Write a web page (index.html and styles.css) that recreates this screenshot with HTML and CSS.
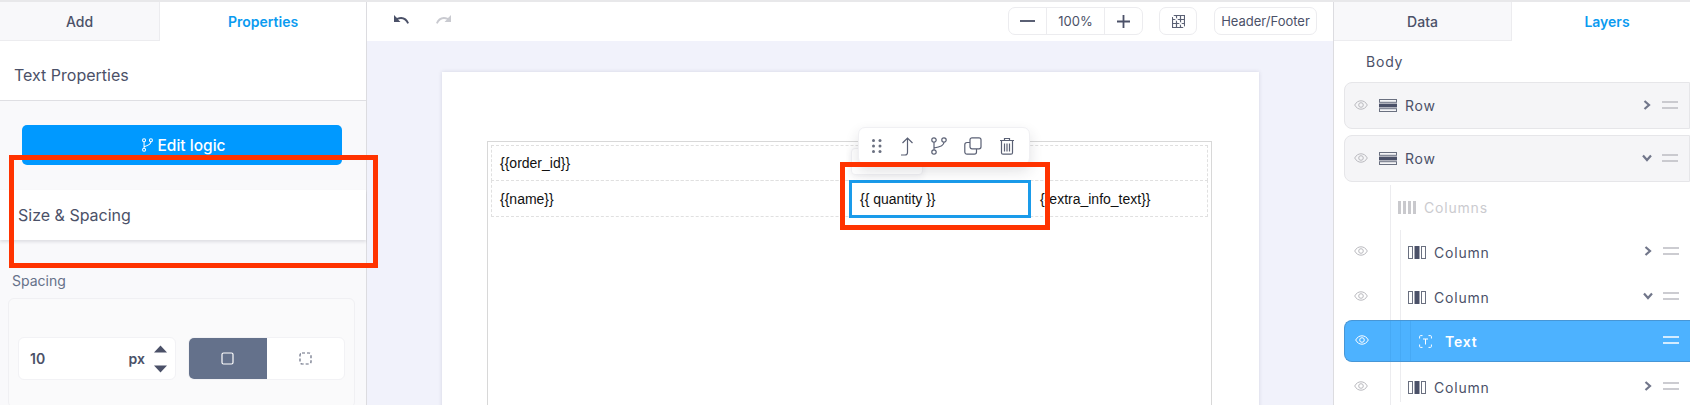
FILE: index.html
```html
<!DOCTYPE html>
<html lang="en">
<head>
<meta charset="utf-8">
<title>Text Properties</title>
<link rel="stylesheet" href="styles.css">
</head>
<body>
<svg class="defs" width="0" height="0" aria-hidden="true">
  <symbol id="eye" viewBox="0 0 14 10"><path d="M.7 5C2.200 2.200 4.400.8 7 .8s4.800 1.400 6.300 4.200C11.800 7.800 9.600 9.200 7 9.200S2.200 7.800.7 5Z" fill="none" stroke="currentColor" stroke-width="1"/><circle cx="7" cy="5" r="2.300" fill="none" stroke="currentColor" stroke-width="1"/></symbol>
  <symbol id="rowi" viewBox="0 0 18 13"><rect x=".5" y=".5" width="17" height="2.800" fill="none" stroke="#6a7080" stroke-width="1"/><rect y="4.600" width="18" height="3.800" fill="#4b5168"/><rect x=".5" y="9.700" width="17" height="2.800" fill="none" stroke="#6a7080" stroke-width="1"/></symbol>
  <symbol id="coli" viewBox="0 0 18 13"><rect x=".5" y=".5" width="4" height="12" fill="none" stroke="#6a7080" stroke-width="1"/><rect x="6.500" width="5" height="13" fill="#4b5168"/><rect x="13.500" y=".5" width="4" height="12" fill="none" stroke="#6a7080" stroke-width="1"/></symbol>
  <symbol id="right" viewBox="0 0 8 10"><path d="M1.500 1 6 5 1.500 9" fill="none" stroke="#71768a" stroke-width="2.200"/></symbol>
  <symbol id="down" viewBox="0 0 10 8"><path d="M1 1.500 5 6 9 1.500" fill="none" stroke="#71768a" stroke-width="2.200"/></symbol>
  <symbol id="handle" viewBox="0 0 16 8"><path d="M0 1h16M0 7h16" fill="none" stroke="currentColor" stroke-width="1.300"/></symbol>
  <symbol id="branch" viewBox="0 0 16 20"><circle cx="3" cy="3" r="2.200" fill="none" stroke="currentColor" stroke-width="1.500"/><circle cx="13" cy="3" r="2.200" fill="none" stroke="currentColor" stroke-width="1.500"/><circle cx="3" cy="17" r="2.200" fill="none" stroke="currentColor" stroke-width="1.500"/><path d="M3 5.200v9.600M13 5.200C13 9 8 11 3 12.500" fill="none" stroke="currentColor" stroke-width="1.500"/></symbol>
</svg>

<div class="app">
  <aside class="left">
    <div class="tabs tabs-left">
      <div class="tab tab-add">Add</div>
      <div class="tab tab-on tab-props">Properties</div>
    </div>
    <div class="panel-title">Text Properties</div>
    <div class="logic-wrap">
      <button class="logic-btn" type="button">
        <svg class="logic-icon" width="11" height="14"><use href="#branch"/></svg>
        Edit logic
      </button>
    </div>
    <div class="section-head">Size &amp; Spacing</div>
    <div class="section-body">
      <div class="field-label">Spacing</div>
      <div class="field-card">
        <div class="field-row">
          <div class="num-input">
            <span class="num-value">10</span>
            <span class="num-unit">px</span>
            <span class="stepper">
              <svg width="13" height="8" viewBox="0 0 13 8"><path d="M6.500.5 13 7.500H0Z" fill="#4b5168"/></svg>
              <svg width="13" height="8" viewBox="0 0 13 8"><path d="M0 .5h13L6.500 7.500Z" fill="#4b5168"/></svg>
            </span>
          </div>
          <div class="toggle">
            <div class="toggle-on">
              <svg width="13" height="13" viewBox="0 0 13 13"><rect x="1" y="1" width="11" height="11" rx="1.500" fill="none" stroke="#fff" stroke-width="1.200"/></svg>
            </div>
            <div class="toggle-off">
              <svg width="13" height="13" viewBox="0 0 13 13"><rect x="1" y="1" width="11" height="11" rx="2" fill="none" stroke="#666c80" stroke-width="1.200" stroke-dasharray="3 2"/></svg>
            </div>
          </div>
        </div>
      </div>
    </div>
  </aside>

  <main class="center">
    <div class="toolbar">
      <div class="history">
        <svg width="15" height="9" viewBox="0 0 15 9"><path d="M0 0v7h6.500L4 4.600C7.500 2.800 11.500 4.500 13.300 8.700L15 8C13 2.400 8 .5 3 3Z" fill="#4b5168"/></svg>
        <svg width="15" height="9" viewBox="0 0 15 9"><path d="M15 0v7H8.500L11 4.600C7.500 2.800 3.500 4.500 1.700 8.700L0 8C2 2.400 7 .5 12 3Z" fill="#c9cad0"/></svg>
      </div>
      <div class="zoom">
        <div class="zoom-btn"><svg width="15" height="2"><rect width="15" height="2" fill="#5a6074"/></svg></div>
        <div class="zoom-val">100%</div>
        <div class="zoom-btn"><svg width="13" height="13"><path d="M0 6.500h13M6.500 0v13" stroke="#4b5168" stroke-width="1.800"/></svg></div>
      </div>
      <div class="tool-btn grid-btn">
        <svg width="13" height="13" viewBox="0 0 13 13"><path d="M.5.500h12v12H.5ZM4.500.500v12M8.500.500v12M.5 4.500h12M.5 8.500h12" fill="none" stroke="#5a6074" stroke-width="1.200"/><path d="M0 0l13 13" stroke="#fff" stroke-width="1.800"/></svg>
      </div>
      <div class="tool-btn hf-btn">Header/Footer</div>
    </div>
    <div class="canvas">
      <div class="page">
        <div class="container">
          <div class="row row-one"><div class="cell">{{order_id}}</div></div>
          <div class="row row-two">
            <div class="cell">{{name}}</div>
            <div class="cell cell-selected">{{ quantity }}</div>
            <div class="cell cell-extra">{{extra_info_text}}</div>
          </div>
        </div>
      </div>
    </div>
  </main>

  <aside class="right">
    <div class="tabs tabs-right">
      <div class="tab tab-data">Data</div>
      <div class="tab tab-on tab-layers">Layers</div>
    </div>
    <div class="layers">
      <div class="body-label">Body</div>
      <div class="layer boxed">
        <svg class="eye" width="14" height="10"><use href="#eye"/></svg>
        <svg class="lic" width="18" height="13"><use href="#rowi"/></svg>
        <span class="lname">Row</span>
        <svg class="chev chev-r" width="8" height="10"><use href="#right"/></svg>
        <svg class="grip" width="16" height="8"><use href="#handle"/></svg>
      </div>
      <div class="layer boxed">
        <svg class="eye" width="14" height="10"><use href="#eye"/></svg>
        <svg class="lic" width="18" height="13"><use href="#rowi"/></svg>
        <span class="lname">Row</span>
        <svg class="chev" width="10" height="8"><use href="#down"/></svg>
        <svg class="grip" width="16" height="8"><use href="#handle"/></svg>
      </div>
      <div class="tree">
        <div class="layer columns-head">
          <svg class="cols-ic" width="18" height="13" viewBox="0 0 18 13"><path d="M0 0h3v13H0ZM5 0h3v13H5ZM10 0h3v13h-3ZM15 0h3v13h-3Z" fill="#c9c9cd"/></svg>
          <span class="lname">Columns</span>
        </div>
        <div class="layer lv2 col1">
          <svg class="eye" width="14" height="10"><use href="#eye"/></svg>
          <svg class="lic" width="18" height="13"><use href="#coli"/></svg>
          <span class="lname">Column</span>
          <svg class="chev chev-r" width="8" height="10"><use href="#right"/></svg>
          <svg class="grip" width="16" height="8"><use href="#handle"/></svg>
        </div>
        <div class="layer lv2 col2">
          <svg class="eye" width="14" height="10"><use href="#eye"/></svg>
          <svg class="lic" width="18" height="13"><use href="#coli"/></svg>
          <span class="lname">Column</span>
          <svg class="chev" width="10" height="8"><use href="#down"/></svg>
          <svg class="grip" width="16" height="8"><use href="#handle"/></svg>
        </div>
        <div class="layer selected">
          <svg class="eye" width="14" height="10"><use href="#eye"/></svg>
          <svg class="tic" width="13" height="13" viewBox="0 0 13 13"><path d="M3.500.6H1.600a1 1 0 0 0-1 1v1.900M9.500.6h1.900a1 1 0 0 1 1 1v1.900M3.500 12.400H1.600a1 1 0 0 1-1-1V9.500M9.500 12.400h1.900a1 1 0 0 0 1-1V9.500M4 4h5M6.500 4v5.500" fill="none" stroke="#fff" stroke-width="1"/></svg>
          <span class="lname">Text</span>
          <svg class="grip" width="16" height="8"><use href="#handle"/></svg>
        </div>
        <div class="layer lv2 col3">
          <svg class="eye" width="14" height="10"><use href="#eye"/></svg>
          <svg class="lic" width="18" height="13"><use href="#coli"/></svg>
          <span class="lname">Column</span>
          <svg class="chev chev-r" width="8" height="10"><use href="#right"/></svg>
          <svg class="grip" width="16" height="8"><use href="#handle"/></svg>
        </div>
      </div>
    </div>
  </aside>

  <div class="ghost-menu"></div>
  <div class="float-menu">
    <svg width="12" height="16" viewBox="0 0 12 16"><g fill="#6a7080"><circle cx="2.500" cy="2.500" r="1.500"/><circle cx="9" cy="2.500" r="1.500"/><circle cx="2.500" cy="8" r="1.500"/><circle cx="9" cy="8" r="1.500"/><circle cx="2.500" cy="13.500" r="1.500"/><circle cx="9" cy="13.500" r="1.500"/></g></svg>
    <svg width="14" height="19" viewBox="0 0 14 19"><path d="M1 18h4a2.500 2.500 0 0 0 2.500-2.500V1M2.500 6 7.500 1l5 5" fill="none" stroke="#5a6074" stroke-width="1.200"/></svg>
    <svg width="16" height="18" viewBox="0 0 16 18"><g fill="none" stroke="#5a6074" stroke-width="1.200"><circle cx="3" cy="3" r="2.200"/><circle cx="13" cy="3" r="2.200"/><circle cx="3" cy="15" r="2.200"/><path d="M3 5.200v7.600M13 5.200c0 3.500-5 5-10 5.800"/></g></svg>
    <svg width="18" height="18" viewBox="0 0 18 18"><g fill="none" stroke="#5a6074" stroke-width="1.200"><rect x="6" y=".8" width="11" height="11" rx="2"/><path d="M6 5.500H3A2.200 2.200 0 0 0 .8 7.700V15A2.200 2.200 0 0 0 3 17.200h7.300a2.200 2.200 0 0 0 2.200-2.200v-3"/></g></svg>
    <svg width="16" height="18" viewBox="0 0 16 18"><g fill="none" stroke="#5a6074" stroke-width="1.200"><path d="M1 3.500h14M5.500 3.500V1.500h5v2M2.500 3.500v12.200a1.500 1.500 0 0 0 1.500 1.500h8a1.500 1.500 0 0 0 1.500-1.500V3.500M5.500 6.500v8M8 6.500v8M10.500 6.500v8"/></g></svg>
  </div>
  <div class="mark mark-left"></div>
  <div class="mark mark-center"></div>
</div>
</body>
</html>
```
FILE: styles.css
```css
* { box-sizing: border-box; }
html, body { margin: 0; padding: 0; height: 405px; overflow: hidden; background: #fff; }
body { font-family: Inter, "Liberation Sans", sans-serif; color: #4b5168; }
.defs { position: absolute; }

.app { position: relative; display: flex; width: 1690px; height: 405px; border-top: 2px solid #e8e8ea; overflow: hidden; }

.tabs { display: flex; height: 39px; flex: none; font-size: 14px; font-weight: 500; }
.tab { display: flex; align-items: center; justify-content: center; background: #f8f8fa; border-bottom: 1px solid #ececef; border-right: 1px solid #ececef; color: #4b5168; }
.tab-on { background: #fff; border: 0; color: #0b9bf0; font-weight: 600; }
.tab-add { width: 160px; }
.tab-props { width: 206px; }
.tab-data { width: 178px; }
.tab-layers { width: 178px; padding-left: 12px; }

/* left panel */
.left { width: 367px; flex: none; display: flex; flex-direction: column; background: #f9f9fb; border-right: 1px solid #dcdce0; }
.panel-title { height: 60px; flex: none; display: flex; align-items: center; padding: 9px 0 0 14px; font-size: 16px; font-weight: 400; background: #fff; border-bottom: 1px solid #dfdfe3; color: #4b5168; }
.logic-wrap { height: 89px; flex: none; padding: 24px 24px 0 22px; }
.logic-btn { display: flex; align-items: center; justify-content: center; gap: 5px; width: 320px; height: 40px; border: 0; padding: 0 0 0 3px; border-radius: 5px; background: #0099ff; color: #fff; font: 500 15.5px Inter, "Liberation Sans", sans-serif; }
.logic-icon { color: #fff; }
.section-head { height: 50px; flex: none; display: flex; align-items: center; padding-left: 18px; font-size: 16px; background: #fff; box-shadow: 0 2px 3px rgba(30, 30, 60, .12); color: #4b5168; }
.section-body { padding: 32px 11px 0 8px; }
.field-label { padding-left: 4px; font-size: 14px; line-height: 17px; color: #667189; }
.field-card { margin-top: 9px; height: 110px; padding: 38px 9px 0; border: 1px solid #f0f0f3; border-radius: 6px; background: #fafafb; }
.field-row { display: flex; gap: 12px; }
.num-input { display: flex; align-items: center; width: 158px; height: 43px; padding: 0 8px 0 11px; background: #fff; border: 1px solid #f2f2f5; border-radius: 6px; font-size: 14px; font-weight: 600; color: #4b5168; }
.num-value { flex: 1; }
.num-unit { margin-right: 9px; }
.stepper { display: flex; flex-direction: column; gap: 12px; }
.stepper svg { display: block; }
.toggle { display: flex; width: 157px; height: 43px; background: #fff; border: 1px solid #f2f2f5; border-radius: 6px; overflow: hidden; }
.toggle-on, .toggle-off { flex: 1; display: flex; align-items: center; justify-content: center; }
.toggle-on { background: #64718b; }

/* centre */
.center { flex: 1; display: flex; flex-direction: column; min-width: 0; }
.toolbar { height: 39px; flex: none; display: flex; align-items: center; background: #fff; padding: 0 16px 0 27px; }
.history { display: flex; align-items: center; gap: 27px; margin-right: auto; padding-bottom: 4px; }
.zoom { display: flex; height: 28px; margin-bottom: 1px; border: 1px solid #ececef; border-radius: 7px; }
.zoom-btn { width: 37px; display: flex; align-items: center; justify-content: center; }
.zoom-val { width: 59px; display: flex; align-items: center; justify-content: center; border-left: 1px solid #ececef; border-right: 1px solid #ececef; font-size: 13px; }
.tool-btn { height: 28px; margin-bottom: 1px; display: flex; align-items: center; justify-content: center; border: 1px solid #ececef; border-radius: 7px; font-size: 13px; }
.grid-btn { width: 38px; margin-left: 16px; }
.hf-btn { width: 103px; margin-left: 17px; }

.canvas { flex: 1; min-height: 0; background: #f1f2fb; padding: 31px 74px 0 75px; overflow: hidden; }
.page { height: 400px; padding: 69px 47px 0 45px; background: #fff; box-shadow: 0 0 4px rgba(40, 40, 80, .14); }
.container { height: 320px; padding: 3px; border: 1px solid #d8d8d8; font-family: "Liberation Sans", sans-serif; font-size: 14px; color: #111; }
.row { border: 1px dashed #e0e0e0; }
.row-one { height: 36px; }
.row-two { display: grid; grid-template-columns: 357px 182px 1fr; height: 37px; margin-top: -1px; }
.cell { display: flex; align-items: center; padding-left: 8px; height: 100%; }
.cell-selected { margin: -1px 0; height: 38px; padding-left: 8px; border: 3px solid #1a9bea; }
.cell-extra { padding-left: 9px; }

/* right panel */
.right { width: 357px; flex: none; display: flex; flex-direction: column; border-left: 1px solid #dcdce0; background: #fff; }
.tab-data { border-right: 1px solid #ececef; }
.layers { padding-left: 10px; }
.body-label { height: 41px; padding: 12px 0 0 22px; font-size: 14px; font-weight: 400; letter-spacing: .8px; line-height: 17px; }
.layer { position: relative; display: flex; align-items: center; font-size: 14px; font-weight: 400; letter-spacing: .8px; color: #4b5168; }
.boxed { height: 47px; margin-bottom: 6px; background: #f5f5f7; border: 1px solid #e6e6e9; border-radius: 8px 0 0 8px; padding-left: 9px; }
.eye { flex: none; color: #b9b9be; margin-bottom: 2px; }
.lic { flex: none; margin-left: 11px; }
.lname { margin-left: 8px; }
.chev { flex: none; margin-left: auto; margin-bottom: 2px; }
.chev-r { margin-right: 1px; }
.chev-r + .grip { margin-left: 11px; }
.chev + .grip { margin-left: 10px; }
.grip { flex: none; margin-right: 11px; margin-bottom: 2px; color: #bcbcc2; }

.tree { position: relative; }
.tree::before { content: ""; position: absolute; left: 46px; top: -3px; height: 220px; border-left: 1px solid #ececef; }
.tree::after { content: ""; position: absolute; left: 56px; top: 42px; height: 172px; border-left: 1px solid #ececef; }
.columns-head { height: 42px; padding-left: 54px; padding-bottom: 4px; color: #cbcbcf; }
.cols-ic { flex: none; }
.lv2 { padding-left: 10px; }
.lv2 .lic { margin-left: 40px; }
.lv2 .lname { margin-left: 8px; }
.col1 { height: 44px; }
.col2 { height: 46px; }
.selected { height: 42px; z-index: 1; padding-left: 10px; background-color: #4db2ff; background-image: linear-gradient(#46a9f5, #46a9f5), linear-gradient(#46a9f5, #46a9f5), linear-gradient(#46a9f5, #46a9f5); background-size: 1px 100%; background-repeat: no-repeat; background-position: 45px 0, 55px 0, 65px 0; border: 1px solid #4796d6; border-right: 0; border-radius: 8px 0 0 8px; color: #fff; }
.selected .eye, .selected .grip { color: #fff; }
.tic { flex: none; margin-left: 50px; }
.selected .lname { margin-left: 13px; font-weight: 600; }
.selected .grip { margin-left: auto; }
.col3 { height: 50px; }

/* overlays */
.float-menu { position: absolute; left: 858px; top: 125px; z-index: 3; width: 172px; height: 38px; display: flex; align-items: center; justify-content: space-between; padding: 0 14px 0 12px; background: #fff; border: 1px solid #f0f0f3; border-radius: 7px; box-shadow: 0 6px 14px rgba(40, 40, 60, .14); }
.ghost-menu { position: absolute; left: 851px; top: 146px; z-index: 2; width: 72px; height: 27px; background: #fff; border: 1px solid #f0f0f3; border-radius: 4px; box-shadow: 0 2px 6px rgba(40, 40, 60, .08); }
.mark { position: absolute; z-index: 4; border: 5px solid #ff3300; pointer-events: none; }
.mark-left { left: 9px; top: 153px; width: 369px; height: 113px; }
.mark-center { left: 840px; top: 160px; width: 210px; height: 68px; }
```
